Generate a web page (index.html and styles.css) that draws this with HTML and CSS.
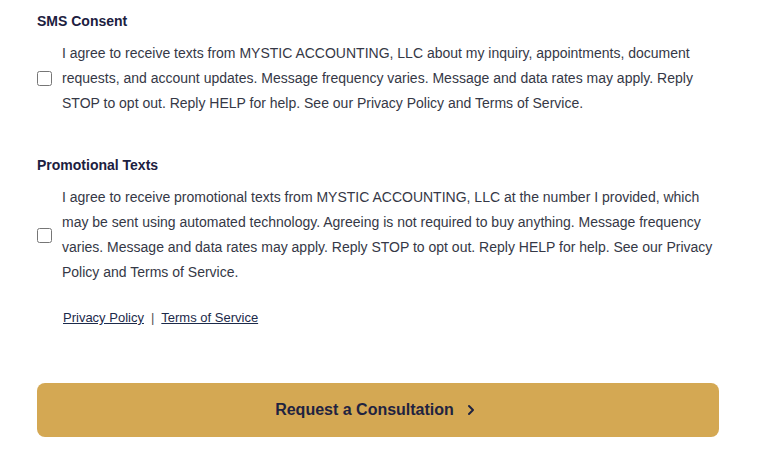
FILE: index.html
```html
<!DOCTYPE html>
<html>
<head>
<meta charset="utf-8">
<link rel="stylesheet" href="styles.css">
</head>
<body>
<div class="form">
  <section class="group">
    <h3 class="label">SMS Consent</h3>
    <label class="consent">
      <input type="checkbox" class="box">
      <span class="text">I agree to receive texts from MYSTIC ACCOUNTING, LLC about my inquiry, appointments, document requests, and account updates. Message frequency varies. Message and data rates may apply. Reply STOP to opt out. Reply HELP for help. See our Privacy Policy and Terms of Service.</span>
    </label>
  </section>
  <section class="group promo">
    <h3 class="label">Promotional Texts</h3>
    <label class="consent">
      <input type="checkbox" class="box">
      <span class="text">I agree to receive promotional texts from MYSTIC ACCOUNTING, LLC at the number I provided, which may be sent using automated technology. Agreeing is not required to buy anything. Message frequency varies. Message and data rates may apply. Reply STOP to opt out. Reply HELP for help. See our Privacy Policy and Terms of Service.</span>
    </label>
  </section>
  <div class="links">
    <a href="#">Privacy Policy</a><span class="sep">|</span><a href="#">Terms of Service</a>
  </div>
  <button class="submit" type="button">
    <span>Request a Consultation</span>
    <svg width="16" height="16" viewBox="0 0 16 16" fill="none"><path d="M6 4l4 4-4 4" stroke="#1f2340" stroke-width="2" stroke-linecap="round" stroke-linejoin="round"/></svg>
  </button>
</div>
</body>
</html>
```
FILE: styles.css
```css
* { box-sizing: border-box; }
body {
  margin: 0;
  background: #fff;
  font-family: "Liberation Sans", Arial, sans-serif;
}
.form {
  width: 682px;
  margin-left: 37px;
  padding-top: 12px;
  display: flex;
  flex-direction: column;
}
.label {
  margin: 0;
  font-size: 14px;
  line-height: 18px;
  font-weight: 700;
  color: #1c2040;
}
.consent {
  display: flex;
  align-items: center;
  gap: 10px;
  margin-top: 11px;
}
.box {
  margin: 0;
  width: 15px;
  height: 15px;
  flex: none;
}
.text {
  font-size: 14px;
  line-height: 25px;
  color: #353846;
}
.promo { margin-top: 40px; }
.links {
  margin-top: 24px;
  padding-left: 25px;
  font-size: 13px;
  line-height: 18px;
}
.links a { color: #1c2a4a; text-decoration: underline; }
.links a:first-child { margin-left: 1px; }
.sep { color: #555; margin: 0 7px; }
.submit {
  margin-top: 56px;
  height: 54px;
  border: none;
  border-radius: 8px;
  background: #d4a853;
  color: #1f2340;
  font-family: "Liberation Sans", Arial, sans-serif;
  font-size: 16px;
  font-weight: 700;
  display: flex;
  align-items: center;
  justify-content: center;
  gap: 9px;
  padding: 0 2px 0 0;
}
```
